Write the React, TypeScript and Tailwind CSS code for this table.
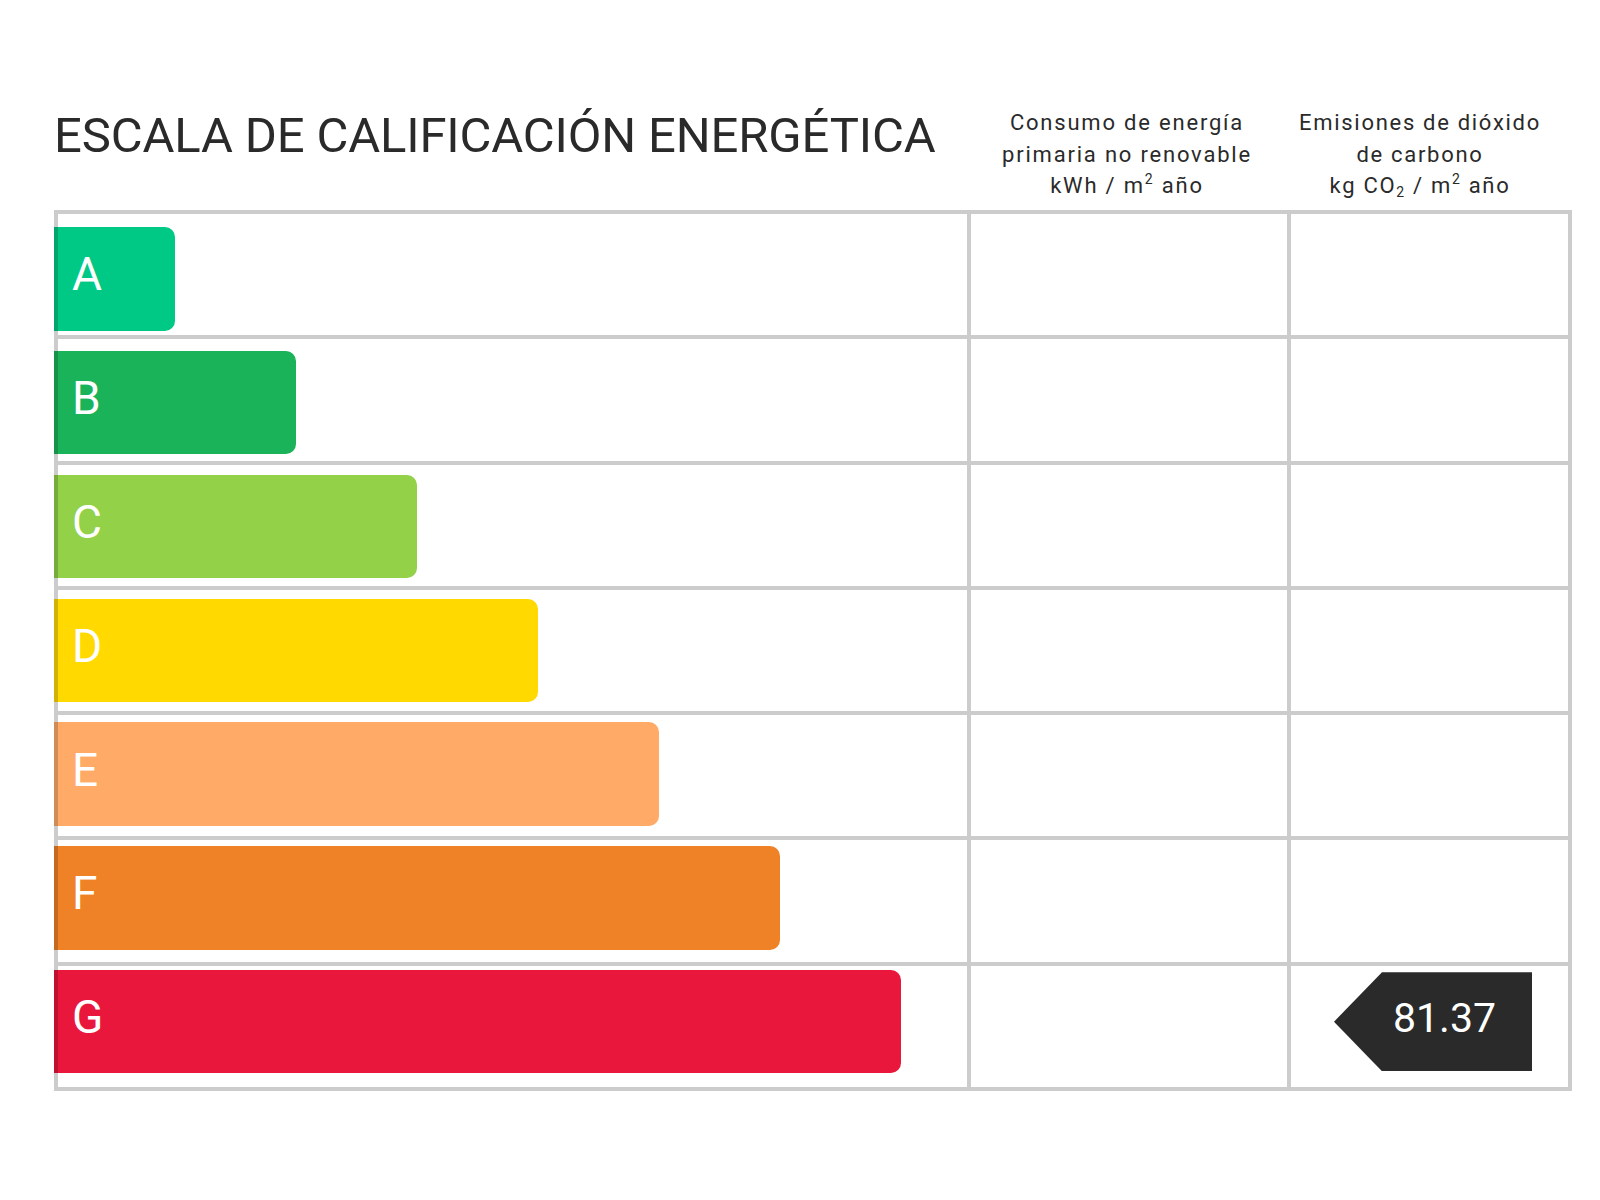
import React from "react";

type Band = {
  letter: string;
  bg: string;
  width: string;
};

const bands: Band[] = [
  { letter: "A", bg: "bg-[#00c985]", width: "w-[121px]" },
  { letter: "B", bg: "bg-[#1bb35a]", width: "w-[242px]" },
  { letter: "C", bg: "bg-[#92d148]", width: "w-[363px]" },
  { letter: "D", bg: "bg-[#ffd900]", width: "w-[484px]" },
  { letter: "E", bg: "bg-[#ffaa66]", width: "w-[605px]" },
  { letter: "F", bg: "bg-[#ef8126]", width: "w-[726px]" },
  { letter: "G", bg: "bg-[#e9173c]", width: "w-[847px]" },
];

export default function App() {
  return (
    <div className="w-[1600px] h-[1200px] bg-white text-[#2a2a2a] font-['Roboto','Liberation_Sans',sans-serif]">
      <div className="pl-[54px] pt-[107px]">
        {/* Header */}
        <div className="flex w-[1518px] h-[94px] mb-[9px] items-start">
          <div className="w-[913px] mt-[4px]">
            <h1 className="text-[49px] leading-none font-normal tracking-[-0.15px] whitespace-nowrap">
              ESCALA DE CALIFICACIÓN ENERGÉTICA
            </h1>
          </div>
          <div className="w-[320px] text-center text-[22px] leading-[31.5px] tracking-[1.8px] whitespace-nowrap">
            <div>Consumo de energía</div>
            <div>primaria no renovable</div>
            <div>
              kWh / m<sup className="text-[14px] top-[-9px]">2</sup> año
            </div>
          </div>
          <div className="w-[266px] text-center text-[22px] leading-[31.5px] tracking-[1.7px] whitespace-nowrap">
            <div>Emisiones de dióxido</div>
            <div>de carbono</div>
            <div>
              kg CO<sub className="text-[14px]">2</sub> / m<sup className="text-[14px] top-[-9px]">2</sup> año
            </div>
          </div>
        </div>

        {/* Table */}
        <div className="relative w-[1518px]">
          <div className="grid grid-cols-[909px_316px_277px] gap-[4px] p-[4px] bg-[#cccccc]">
            {bands.map((b) => (
              <React.Fragment key={b.letter}>
                <div className="h-[121.25px] bg-white" />
                <div className="h-[121.25px] bg-white" />
                <div className="h-[121.25px] bg-white" />
              </React.Fragment>
            ))}
          </div>

          {/* Bars overlay */}
          <div className="absolute left-0 right-0 top-[17.3px] flex flex-col gap-[20.5px]">
            {bands.map((b) => (
              <div key={b.letter} className="flex items-center h-[103.3px]">
                <div
                  className={`${b.width} ${b.bg} h-full rounded-r-[10px] shadow-[inset_4px_0_0_rgba(0,0,0,0.18)] flex items-center pl-[18px] pb-[9px]`}
                >
                  <span className="text-white text-[46px] leading-none">{b.letter}</span>
                </div>
                {b.letter === "G" && (
                  <div className="ml-auto mr-[40px] w-[198px] h-[99px] bg-[#2a2a2a] [clip-path:polygon(48px_0,100%_0,100%_100%,48px_100%,0_50%)] flex items-center pl-[59px] pb-[7px]">
                    <span className="text-white text-[41px] leading-none">81.37</span>
                  </div>
                )}
              </div>
            ))}
          </div>
        </div>
      </div>
    </div>
  );
}
